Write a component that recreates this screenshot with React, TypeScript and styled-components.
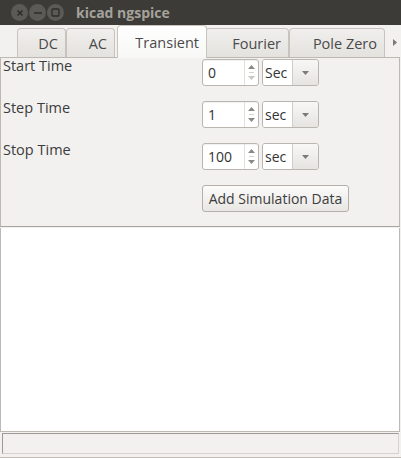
import React from 'react'
import styled, {createGlobalStyle} from 'styled-components'

const GlobalStyle = createGlobalStyle`
  html, body {
    margin: 0;
    padding: 0;
  }
  body {
    background: #f2f1f0;
    font-family: "Open Sans", "DejaVu Sans", sans-serif;
    font-size: 13.5px;
    color: #3c3c3c;
  }
`

const Window = styled.div`
  width: 401px;
  height: 458px;
  display: flex;
  flex-direction: column;
  background: #f2f1f0;
  overflow: hidden;
`

const TitleBar = styled.div`
  height: 25px;
  flex: none;
  display: flex;
  align-items: center;
  padding-left: 11px;
  box-sizing: border-box;
  background: #3c3b37;
`

const WinButton = styled.div`
  width: 17px;
  height: 17px;
  margin-right: 1px;
  border-radius: 50%;
  background: #5b5a56;
  display: flex;
  align-items: center;
  justify-content: center;
`

const Title = styled.div`
  margin-left: 11px;
  font-weight: bold;
  font-size: 14px;
  color: #a5a29b;
`

const TabStrip = styled.div`
  height: 32px;
  flex: none;
  display: flex;
  align-items: flex-end;
  padding-left: 17px;
`

const Tab = styled.div<{$width: number; $active?: boolean}>`
  width: ${p => p.$width}px;
  height: ${p => (p.$active ? 33 : 29)}px;
  box-sizing: border-box;
  flex: none;
  display: flex;
  align-items: center;
  justify-content: flex-end;
  padding-right: 7px;
  margin: ${p => (p.$active ? '0 -2px -1px 2px' : '0')};
  border: 1px solid #c8c4bd;
  border-bottom: none;
  border-radius: 4px 4px 0 0;
  background: ${p =>
    p.$active
      ? 'linear-gradient(#ffffff, #f7f7f6)'
      : 'linear-gradient(#f0efed, #e4e2de)'};
  font-size: 14.5px;
  color: #4a4a4a;
  position: ${p => (p.$active ? 'relative' : 'static')};
  z-index: ${p => (p.$active ? 1 : 0)};
`

const TabArrow = styled.div`
  flex: 1;
  display: flex;
  align-items: center;
  justify-content: center;
  height: 29px;
  padding-left: 4px;
`

const Panel = styled.div`
  flex: none;
  margin-right: 1px;
  border: 1px solid #bdb9b2;
  border-bottom-color: #a9a59e;
  padding: 1px 0 14px 2px;
`

const FormGrid = styled.div`
  display: grid;
  grid-template-columns: 199px auto;
  grid-template-rows: repeat(3, 42px) auto;
`

const Label = styled.div`
  line-height: 14px;
  font-size: 14.5px;
`

const Controls = styled.div`
  display: flex;
  align-items: flex-start;
`

const SpinBox = styled.div`
  display: flex;
  height: 27px;
  box-sizing: border-box;
  border: 1px solid #bab6af;
  border-radius: 3px;
  background: #fff;
  box-shadow: inset 0 1px 1px rgba(0, 0, 0, 0.06);
`

const SpinEntry = styled.div`
  width: 41px;
  padding-left: 5px;
  box-sizing: border-box;
  display: flex;
  align-items: center;
  font-size: 14px;
  color: #333;
`

const SpinArrows = styled.div`
  width: 13px;
  display: flex;
  flex-direction: column;
  align-items: center;
  justify-content: center;
  border-left: 1px solid #e2e0dc;
  gap: 3px;
`

const SpinSep = styled.div`
  width: 5px;
  height: 1px;
  background: #d5d2cd;
`

const Combo = styled.div`
  display: flex;
  width: 57px;
  height: 27px;
  margin-left: 3px;
  box-sizing: border-box;
  border: 1px solid #bab6af;
  border-radius: 3px;
  overflow: hidden;
`

const ComboText = styled.div`
  width: 30px;
  background: #fff;
  display: flex;
  align-items: center;
  padding-left: 2px;
  box-sizing: border-box;
  font-size: 14px;
  color: #333;
  border-right: 1px solid #d0cdc8;
`

const ComboArrow = styled.div`
  flex: 1;
  display: flex;
  align-items: center;
  justify-content: center;
  background: linear-gradient(#f7f7f6, #e6e4e1);
`

const Button = styled.div`
  width: 147px;
  height: 27px;
  box-sizing: border-box;
  display: flex;
  align-items: center;
  justify-content: center;
  border: 1px solid #b4b0a9;
  border-radius: 3px;
  background: linear-gradient(#fbfbfa, #e9e7e4);
  font-size: 14px;
  color: #3c3c3c;
`

const Output = styled.div`
  flex: 1;
  margin: 1px 1px 0 0;
  background: #fff;
  border-left: 1px solid #bdb9b2;
  border-right: 1px solid #bdb9b2;
  border-bottom: 1px solid #bdb9b2;
`

const StatusBar = styled.div`
  height: 26px;
  flex: none;
  box-sizing: border-box;
  padding: 1px 2px 3px 2px;
  border-bottom: 1px solid #c3bfb8;
  display: flex;
`

const StatusField = styled.div`
  flex: 1;
  border-top: 1px solid #9d9a94;
  border-left: 1px solid #9d9a94;
  border-right: 1px solid #d6d3ce;
  border-bottom: 1px solid #d6d3ce;
  background: #f2f1f0;
`

const Tri = ({dir, color}: {dir: 'up' | 'down' | 'right'; color: string}) => {
  const pts = dir === 'up' ? '0,4 7,4 3.5,0' : dir === 'down' ? '0,0 7,0 3.5,4' : '0,0 0,7 4,3.5'
  const w = dir === 'right' ? 4 : 7
  const h = dir === 'right' ? 7 : 4
  return (
    <svg width={w} height={h} viewBox={`0 0 ${w} ${h}`}>
      <polygon points={pts} fill={color}/>
    </svg>
  )
}

const CloseGlyph = () => (
  <svg width="8" height="8" viewBox="0 0 8 8">
    <path d="M1.5 1.5 L6.5 6.5 M6.5 1.5 L1.5 6.5" stroke="#2d2c29" strokeWidth="1.6"/>
  </svg>
)
const MinGlyph = () => (
  <svg width="10" height="8" viewBox="0 0 10 8">
    <path d="M1 4 H9" stroke="#2d2c29" strokeWidth="1.5"/>
  </svg>
)
const MaxGlyph = () => (
  <svg width="9" height="9" viewBox="0 0 9 9">
    <rect x="1" y="1" width="7" height="7" rx="1" fill="none" stroke="#2d2c29" strokeWidth="1.3"/>
  </svg>
)

const rows = [
  {label: 'Start Time', value: '0', unit: 'Sec', atMin: true},
  {label: 'Step Time', value: '1', unit: 'sec', atMin: false},
  {label: 'Stop Time', value: '100', unit: 'sec', atMin: false},
]

const tabs = [
  {name: 'DC', width: 49},
  {name: 'AC', width: 49},
  {name: 'Transient', width: 90, active: true},
  {name: 'Fourier', width: 84},
  {name: 'Pole Zero', width: 96},
]

export default function App() {
  return (
    <Window>
      <GlobalStyle/>
      <TitleBar>
        <WinButton><CloseGlyph/></WinButton>
        <WinButton><MinGlyph/></WinButton>
        <WinButton><MaxGlyph/></WinButton>
        <Title>kicad ngspice</Title>
      </TitleBar>
      <TabStrip>
        {tabs.map(t => (
          <Tab key={t.name} $width={t.width} $active={t.active}>{t.name}</Tab>
        ))}
        <TabArrow><Tri dir="right" color="#7c7a76"/></TabArrow>
      </TabStrip>
      <Panel>
        <FormGrid>
          {rows.map(r => (
            <React.Fragment key={r.label}>
              <Label>{r.label}</Label>
              <Controls>
                <SpinBox>
                  <SpinEntry>{r.value}</SpinEntry>
                  <SpinArrows>
                    <Tri dir="up" color="#8a8884"/>
                    <SpinSep/>
                    <Tri dir="down" color={r.atMin ? '#c9c7c3' : '#8a8884'}/>
                  </SpinArrows>
                </SpinBox>
                <Combo>
                  <ComboText>{r.unit}</ComboText>
                  <ComboArrow><Tri dir="down" color="#7c7a76"/></ComboArrow>
                </Combo>
              </Controls>
            </React.Fragment>
          ))}
          <div/>
          <Controls>
            <Button>Add Simulation Data</Button>
          </Controls>
        </FormGrid>
      </Panel>
      <Output/>
      <StatusBar>
        <StatusField/>
      </StatusBar>
    </Window>
  )
}
